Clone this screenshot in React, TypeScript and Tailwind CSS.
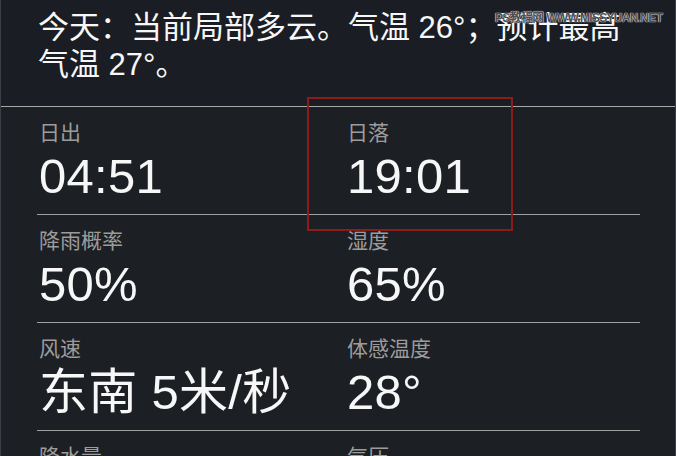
import React from "react";

type Cell = { label: string; value: string };

const rows: Cell[][] = [
  [
    { label: "日出", value: "04:51" },
    { label: "日落", value: "19:01" },
  ],
  [
    { label: "降雨概率", value: "50%" },
    { label: "湿度", value: "65%" },
  ],
  [
    { label: "风速", value: "东南 5米/秒" },
    { label: "体感温度", value: "28°" },
  ],
  [
    { label: "降水量", value: "0 厘米" },
    { label: "气压", value: "1,004 百帕" },
  ],
];

const font = { fontFamily: '"Liberation Sans", "Noto Sans CJK SC", sans-serif' };

function DetailCell({ cell }: { cell: Cell }) {
  return (
    <div className="flex flex-col">
      <div className="pt-[13px] text-[21px] leading-[26px] text-[#9c9c9c]">{cell.label}</div>
      <div className="mt-[2px] whitespace-nowrap text-[49px] leading-[56px] tracking-[0.3px] text-[#f7f7f7]">
        {cell.value}
      </div>
    </div>
  );
}

export default function App() {
  return (
    <div
      className="relative h-[456px] w-[676px] overflow-hidden border-x border-[#3b3e44] bg-[#1c1f24]"
      style={font}
    >
      {/* today summary */}
      <div className="h-[107px] border-b border-[#a9a9a9] bg-[#1a1d23] px-[37px] pt-[9px] text-[31px] leading-[37px] text-[#f7f7f7]">
        今天：当前局部多云。气温 26°；预计最高
        <br />
        气温 27°。
      </div>

      {/* detail grid */}
      <div className="ml-[36px] w-[603px]">
        {rows.map((row, i) => (
          <div
            key={i}
            className="grid h-[108px] grid-cols-[308px_1fr] border-b border-[#a0a0a0] pl-[2px]"
          >
            {row.map((cell) => (
              <DetailCell key={cell.label} cell={cell} />
            ))}
          </div>
        ))}
      </div>

      {/* highlight box */}
      <div className="absolute left-[306px] top-[97px] h-[134px] w-[206px] border-2 border-[#8e1b1b]" />

      {/* site mark */}
      <div
        className="absolute left-[494px] top-[11px] whitespace-nowrap text-[12px] font-bold leading-[15px] tracking-[-0.7px] text-[#4a4d52] [text-shadow:0_0_1px_#fff,0_0_1px_#fff]"
        style={font}
      >
        PS教程网 WWW.MISSYUAN.NET
      </div>
    </div>
  );
}
